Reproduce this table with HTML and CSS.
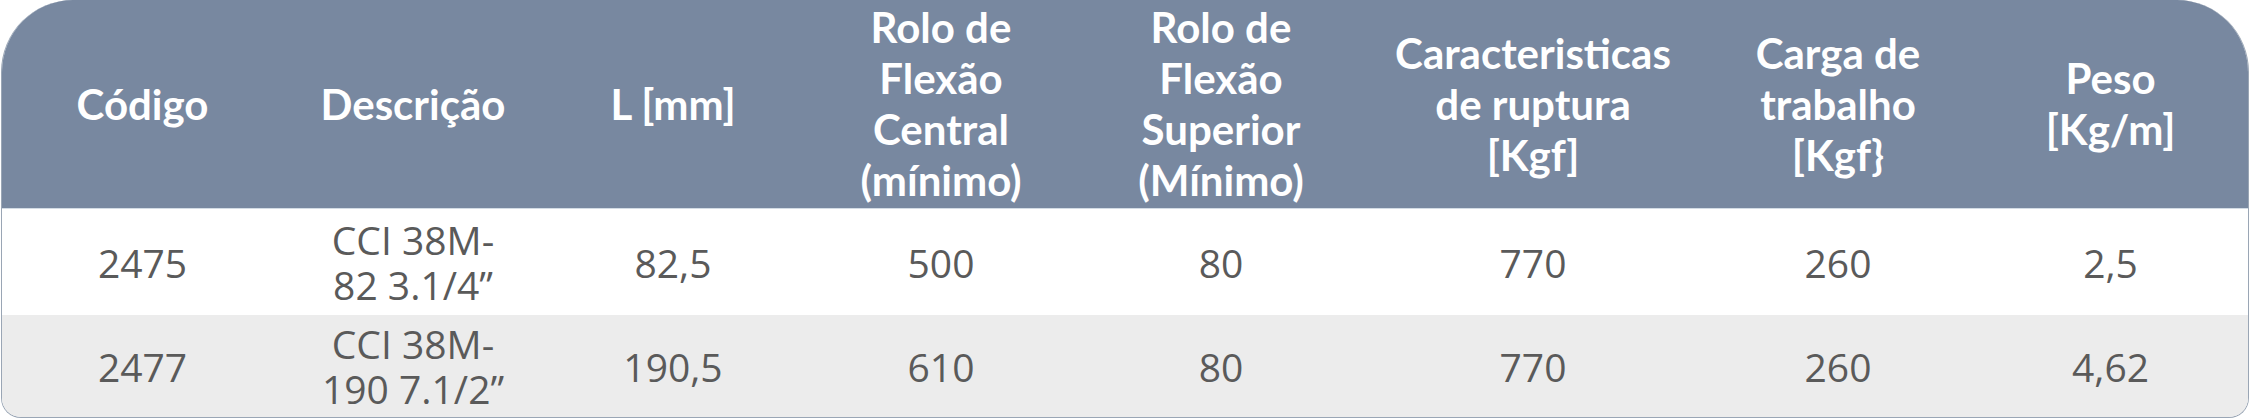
FILE: index.html
```html
<!DOCTYPE html>
<html lang="pt">
<head>
<meta charset="utf-8">
<title>Tabela</title>
<link rel="stylesheet" href="styles.css">
</head>
<body>
<div class="wrap">
  <table class="spec">
    <colgroup>
      <col class="c1"><col class="c2"><col class="c3"><col class="c4">
      <col class="c5"><col class="c6"><col class="c7"><col class="c8">
    </colgroup>
    <thead>
      <tr>
        <th>Código</th>
        <th>Descrição</th>
        <th>L [mm]</th>
        <th>Rolo de<br>Flexão<br>Central<br>(mínimo)</th>
        <th>Rolo de<br>Flexão<br>Superior<br>(Mínimo)</th>
        <th>Caracteristicas<br>de ruptura<br>[Kgf]</th>
        <th>Carga de<br>trabalho<br>[Kgf}</th>
        <th>Peso<br>[Kg/m]</th>
      </tr>
    </thead>
    <tbody>
      <tr class="odd">
        <td>2475</td>
        <td>CCI 38M-<br>82 3.1/4”</td>
        <td>82,5</td>
        <td>500</td>
        <td>80</td>
        <td>770</td>
        <td>260</td>
        <td>2,5</td>
      </tr>
      <tr class="even">
        <td>2477</td>
        <td>CCI 38M-<br>190 7.1/2”</td>
        <td>190,5</td>
        <td>610</td>
        <td>80</td>
        <td>770</td>
        <td>260</td>
        <td>4,62</td>
      </tr>
    </tbody>
  </table>
</div>
</body>
</html>
```
FILE: styles.css
```css
html, body {
  margin: 0;
  padding: 0;
  background: #ffffff;
}

.wrap {
  width: 2246px;
  margin-left: 1px;
  border: 1px solid #9aa6b5;
  border-top: none;
  border-radius: 72px 72px 20px 20px;
  overflow: hidden;
  background: #ffffff;
}

.spec {
  width: 100%;
  border-collapse: collapse;
  table-layout: fixed;
}

.c1 { width: 281px; }
.c2 { width: 260px; }
.c3 { width: 260px; }
.c4 { width: 276px; }
.c5 { width: 284px; }
.c6 { width: 340px; }
.c7 { width: 270px; }
.c8 { width: 275px; }

.spec thead th {
  height: 208px;
  padding: 0;
  background: #7888a0;
  color: #ffffff;
  font-family: Lato, "Open Sans", sans-serif;
  font-weight: 700;
  font-size: 42px;
  line-height: 51px;
  text-align: center;
  vertical-align: middle;
  border-bottom: 1px solid #d3dce5;
}

.spec tbody td {
  padding: 0;
  font-family: "Open Sans", "Liberation Sans", sans-serif;
  font-stretch: 92%;
  font-weight: 400;
  font-size: 39px;
  line-height: 45px;
  color: #5a5a5a;
  text-align: center;
  vertical-align: middle;
}

.spec tr.odd td {
  height: 106px;
  background: #ffffff;
}

.spec tr.even td {
  height: 102px;
  background: #ececec;
}
```
